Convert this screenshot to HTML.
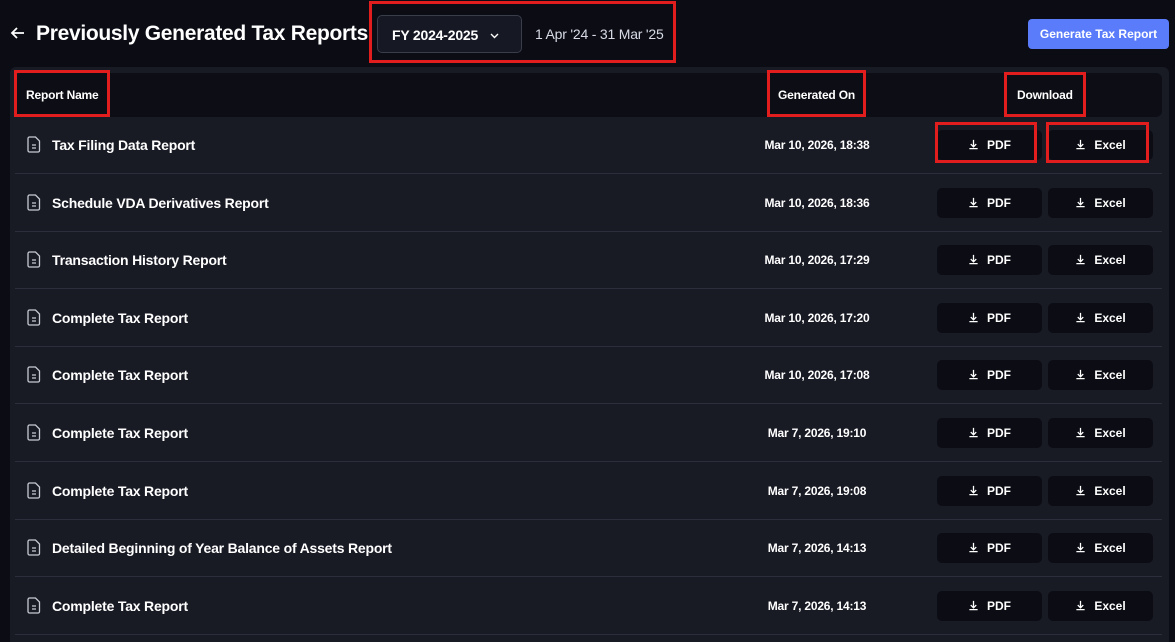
<!DOCTYPE html>
<html><head><style>
*{box-sizing:border-box;margin:0;padding:0}
html,body{width:1175px;height:642px;overflow:hidden}
body{background:#0b0c14;font-family:"Liberation Sans",sans-serif;color:#fff;position:relative}
.abs{position:absolute}
.red{position:absolute;border:3px solid #e11d1d}
.title{left:36px;top:22px;font-size:21px;font-weight:bold;letter-spacing:-0.3px}
.arr{left:10px;top:25px}
.dd{left:377px;top:15px;width:145px;height:38px;border:1px solid #3a3d4a;border-radius:5px;background:#161824;font-size:14px;font-weight:bold;padding:11px 0 0 14px;letter-spacing:-0.2px}
.range{left:535px;top:26px;font-size:14px;color:#d8dbe6;letter-spacing:-0.2px}
.gen{left:1028px;top:19px;width:141px;height:30px;background:#5b7cfa;border-radius:4px;font-size:12px;font-weight:bold;text-align:center;line-height:30px}
.panel{left:10px;top:67px;width:1159px;height:580px;background:#181a24;border-radius:6px}
.hdr{left:15px;top:73px;width:1147px;height:44px;background:#0c0d15;border-radius:6px}
.h{font-size:12px;font-weight:bold;top:88px;letter-spacing:-0.2px}
.row{position:absolute;left:15px;width:1147px;height:58px;border-bottom:1px solid #2c2f3b}
.nm{position:absolute;left:37px;top:21px;font-size:14px;font-weight:bold;letter-spacing:-0.2px}
.ic{position:absolute;left:12px;top:20px}
.dt{position:absolute;left:732px;width:140px;text-align:center;top:22px;font-size:12px;font-weight:bold;letter-spacing:-0.2px}
.b{position:absolute;top:14px;width:105px;height:30px;background:#0b0c14;border-radius:5px;font-size:12px;font-weight:bold;text-align:center;line-height:30px}
.b svg{vertical-align:-1px;margin-right:8px}
</style></head><body>
<svg class="abs arr" width="16" height="16" viewBox="0 0 16 16" fill="none" stroke="#fff" stroke-width="1.8"><path d="M14 8H2M7 3L2 8l5 5"/></svg>
<div class="abs title">Previously Generated Tax Reports</div>
<div class="abs dd">FY 2024-2025 <svg style="margin-left:8px;vertical-align:1px" width="9" height="6" viewBox="0 0 9 6" fill="none" stroke="#fff" stroke-width="1.4"><path d="M1 1l3.5 3.5L8 1"/></svg></div>
<div class="abs range">1 Apr '24 - 31 Mar '25</div>
<div class="abs gen">Generate Tax Report</div>
<div class="abs panel"></div>
<div class="abs hdr"></div>
<div class="abs h" style="left:26px">Report Name</div>
<div class="abs h" style="left:778px">Generated On</div>
<div class="abs h" style="left:1017px">Download</div>
<div id="rows"></div>
<script>
var d=[["Tax Filing Data Report","Mar 10, 2026, 18:38"],["Schedule VDA Derivatives Report","Mar 10, 2026, 18:36"],["Transaction History Report","Mar 10, 2026, 17:29"],["Complete Tax Report","Mar 10, 2026, 17:20"],["Complete Tax Report","Mar 10, 2026, 17:08"],["Complete Tax Report","Mar 7, 2026, 19:10"],["Complete Tax Report","Mar 7, 2026, 19:08"],["Detailed Beginning of Year Balance of Assets Report","Mar 7, 2026, 14:13"],["Complete Tax Report","Mar 7, 2026, 14:13"]];
var dl='<svg width="11" height="11" viewBox="0 0 12 12" fill="none" stroke="#fff" stroke-width="1.4"><path d="M6 1v7M3 5.5L6 8.5 9 5.5M1.5 10.5h9"/></svg>';
var ic='<svg width="14" height="17" viewBox="0 0 14 17" fill="none" stroke="#c8cad3" stroke-width="1.3"><path d="M2.5 1h6l4 4v9.5a1.5 1.5 0 0 1-1.5 1.5h-8.5A1.5 1.5 0 0 1 1 14.5v-12A1.5 1.5 0 0 1 2.5 1z"/><path d="M5 9h4M5 12h4"/></svg>';
var h='';
for(var i=0;i<d.length;i++){var t=116+i*57.6;
h+='<div class="row" style="top:'+t+'px"><div class="ic">'+ic+'</div><div class="nm">'+d[i][0]+'</div><div class="dt">'+d[i][1]+'</div><div class="b" style="left:922px">'+dl+'PDF</div><div class="b" style="left:1033px">'+dl+'Excel</div></div>';}
document.getElementById('rows').innerHTML=h;
</script>
<div class="red" style="left:369px;top:1px;width:307px;height:62px"></div>
<div class="red" style="left:14px;top:70px;width:96px;height:47px"></div>
<div class="red" style="left:767px;top:70px;width:99px;height:47px"></div>
<div class="red" style="left:1004px;top:72px;width:82px;height:45px"></div>
<div class="red" style="left:935px;top:122px;width:102px;height:41px"></div>
<div class="red" style="left:1046px;top:122px;width:103px;height:41px"></div>
</body></html>
